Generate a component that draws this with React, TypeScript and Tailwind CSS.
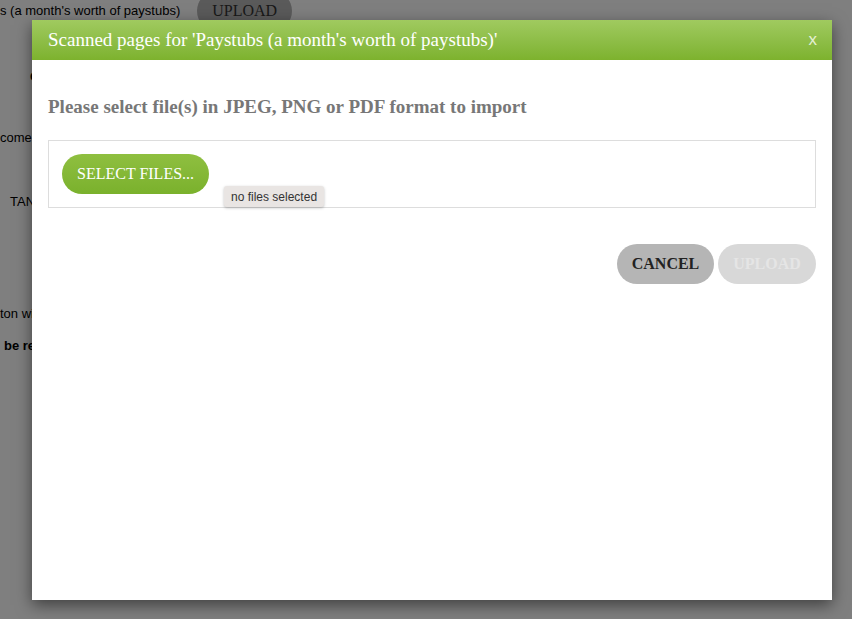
import React from "react";

function BackgroundPage() {
  return (
    <div className="min-h-[619px] bg-white text-[13px] text-black font-['Liberation_Sans',Arial,sans-serif] overflow-hidden">
      <div className="flex items-center h-[24px] mt-[-1px]">
        <span className="whitespace-nowrap">s (a month's worth of paystubs)</span>
        <button className="ml-[17px] h-[40px] w-[95px] rounded-full bg-[#b4b4b4] text-[16px] text-[#333] font-['Liberation_Serif',serif] shrink-0">
          UPLOAD
        </button>
      </div>
      <div className="h-[60px] pl-[30px] pt-[46px] leading-[16px] font-bold">C</div>
      <div className="h-[55px] pt-[47px] leading-[16px] whitespace-nowrap">come</div>
      <div className="h-[64px] pt-[56px] pl-[10px] leading-[16px] whitespace-nowrap">TANF</div>
      <div className="h-[112px] pt-[104px] leading-[16px] whitespace-nowrap">ton will</div>
      <div className="h-[32px] pt-[24px] pl-[4px] leading-[16px] font-bold whitespace-nowrap">be returned</div>
    </div>
  );
}

function ScanModal() {
  return (
    <div className="w-[800px] h-[580px] bg-white shadow-[0_5px_15px_rgba(0,0,0,0.5)] flex flex-col font-['Liberation_Serif','Times_New_Roman',serif]">
      <div className="h-[40px] shrink-0 flex items-center justify-between px-4 bg-gradient-to-b from-[#a0ca5f] to-[#7db22d]">
        <h2 className="text-[19px] text-white whitespace-nowrap">
          Scanned pages for 'Paystubs (a month's worth of paystubs)'
        </h2>
        <span className="text-[17px] text-[#e4f0d4] font-['Liberation_Sans',Arial,sans-serif] mr-[-1px]">x</span>
      </div>
      <div className="px-4">
        <h3 className="pt-[37px] text-[19px] leading-[20px] font-bold text-[#777]">
          Please select file(s) in JPEG, PNG or PDF format to import
        </h3>
        <div className="relative mt-[23px] border border-[#ddd] p-[13px]">
          <button className="h-[40px] px-[15px] rounded-full bg-gradient-to-b from-[#8fbf40] to-[#7ab12c] text-white text-[16px]">
            SELECT FILES...
          </button>
          <div className="absolute left-[175px] top-[45px] h-[21px] px-[7px] flex items-center rounded-[3px] bg-[#e9e5e3] text-[12px] text-[#333] font-['Liberation_Sans',Arial,sans-serif] shadow-[0_1px_3px_rgba(0,0,0,0.25)] whitespace-nowrap">
            no files selected
          </div>
        </div>
        <div className="mt-[36px] flex justify-end gap-[4px]">
          <button className="h-[40px] w-[97px] rounded-full bg-[#b5b5b5] text-[16px] font-bold text-[#222]">
            CANCEL
          </button>
          <button className="h-[40px] w-[98px] rounded-full bg-[#d8d8d8] text-[16px] font-bold text-[#e5e5e5]">
            UPLOAD
          </button>
        </div>
      </div>
    </div>
  );
}

export default function App() {
  return (
    <div className="relative w-[852px] h-[619px] overflow-hidden">
      <BackgroundPage />
      <div className="absolute inset-0 bg-black/50 pt-[20px] pl-[32px]">
        <ScanModal />
      </div>
    </div>
  );
}
